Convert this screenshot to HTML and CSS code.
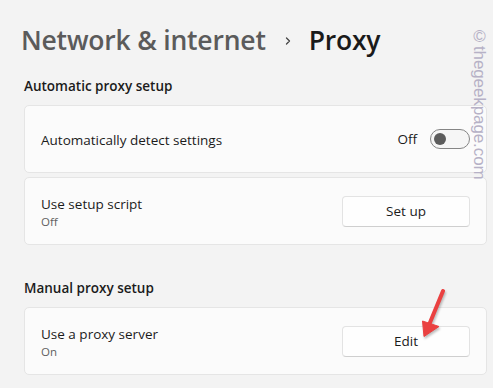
FILE: index.html
```html
<!doctype html>
<html lang="en">
  <head>
    <meta charset="UTF-8" />
    <meta name="viewport" content="width=device-width, initial-scale=1.0" />
    <title>Proxy</title>
    <link rel="stylesheet" href="styles.css">
  </head>
  <body>
    <div class="page">
      <h1 class="breadcrumb">
        <span class="crumb-parent">Network &amp; internet</span>
        <svg class="crumb-chevron" viewBox="0 0 10 10" width="10" height="10">
          <path d="M3.5 2 L6.5 5 L3.5 8" fill="none" stroke="currentColor" stroke-width="1.3" stroke-linecap="round" stroke-linejoin="round"/>
        </svg>
        <span class="crumb-current">Proxy</span>
      </h1>

      <h2 class="section-title">Automatic proxy setup</h2>
      <div class="card">
        <div class="card-text">
          <div class="card-label">Automatically detect settings</div>
        </div>
        <div class="card-control">
          <span class="toggle-state">Off</span>
          <span class="toggle"><span class="toggle-knob"></span></span>
        </div>
      </div>
      <div class="card">
        <div class="card-text">
          <div class="card-label">Use setup script</div>
          <div class="card-sub">Off</div>
        </div>
        <button class="btn">Set up</button>
      </div>

      <h2 class="section-title section-gap">Manual proxy setup</h2>
      <div class="card">
        <div class="card-text">
          <div class="card-label">Use a proxy server</div>
          <div class="card-sub">On</div>
        </div>
        <button class="btn">Edit</button>
      </div>
    </div>

    <!-- Anotaciones sobre la captura -->
    <div class="watermark">©thegeekpage.com</div>
    <svg class="arrow" viewBox="0 0 40 60" width="40" height="60">
      <path d="M23 4 L9 38" fill="none" stroke="#ea4141" stroke-width="4" stroke-linecap="round"/>
      <path d="M2.5 34 L4 49.5 L19 39.5 Z" fill="#ea4141" stroke="#ea4141" stroke-width="1" stroke-linejoin="round"/>
    </svg>
  </body>
</html>
```

FILE: styles.css
```css
* {
  margin: 0;
  padding: 0;
  box-sizing: border-box;
}

body {
  font-family: "Open Sans", "Noto Sans", sans-serif;
  background: #f3f3f3;
  color: #1b1b1b;
  overflow: hidden;
  position: relative;
  width: 493px;
  height: 388px;
}

.page {
  padding: 22px 6px 0 24px;
}

.breadcrumb {
  display: flex;
  align-items: center;
  font-size: 26.5px;
  font-weight: 600;
  line-height: 36px;
  margin-left: -3px;
  letter-spacing: -0.2px;
}

.crumb-parent {
  color: #5b5b5b;
}

.crumb-chevron {
  color: #444;
  margin: 2px 16px 0 17px;
}

.crumb-current {
  color: #1a1a1a;
}

.section-title {
  font-size: 13.5px;
  font-weight: 600;
  line-height: 20px;
  margin: 18px 0 9px;
  color: #1b1b1b;
}

.section-gap {
  margin-top: 33px;
}

.card {
  display: flex;
  align-items: center;
  justify-content: space-between;
  background: #fbfbfb;
  border: 1px solid #e5e5e5;
  border-radius: 5px;
  height: 68px;
  padding: 0 16px 0 16px;
  margin-bottom: 4px;
}

.card-label {
  font-size: 13.5px;
  line-height: 18px;
  color: #1b1b1b;
}

.card-sub {
  font-size: 11.5px;
  line-height: 16px;
  color: #5f5f5f;
  margin-top: 1px;
}

.card-text {
  padding-top: 2px;
}

.card-control {
  display: flex;
  align-items: center;
  gap: 13px;
}

.toggle-state {
  font-size: 13.5px;
  color: #1b1b1b;
}

.toggle {
  display: flex;
  align-items: center;
  width: 40px;
  height: 20px;
  border: 1px solid #858585;
  border-radius: 10px;
  background: #f6f6f6;
  padding-left: 3px;
}

.toggle-knob {
  width: 12px;
  height: 12px;
  border-radius: 50%;
  background: #5c5c5c;
}

.btn {
  font-family: inherit;
  width: 128px;
  height: 31px;
  background: #fefefe;
  border: 1px solid #e3e3e3;
  border-bottom-color: #cfcfcf;
  border-radius: 4px;
  font-size: 13.5px;
  color: #1b1b1b;
}

.watermark {
  position: absolute;
  left: 469px;
  top: 27px;
  writing-mode: vertical-rl;
  font-family: "Liberation Sans", Arial, sans-serif;
  font-size: 17px;
  color: #b6b1c6;
  letter-spacing: -0.1px;
}

.arrow {
  position: absolute;
  left: 420px;
  top: 287px;
  filter: drop-shadow(1px 2px 1px rgba(0, 0, 0, 0.25));
}
```
